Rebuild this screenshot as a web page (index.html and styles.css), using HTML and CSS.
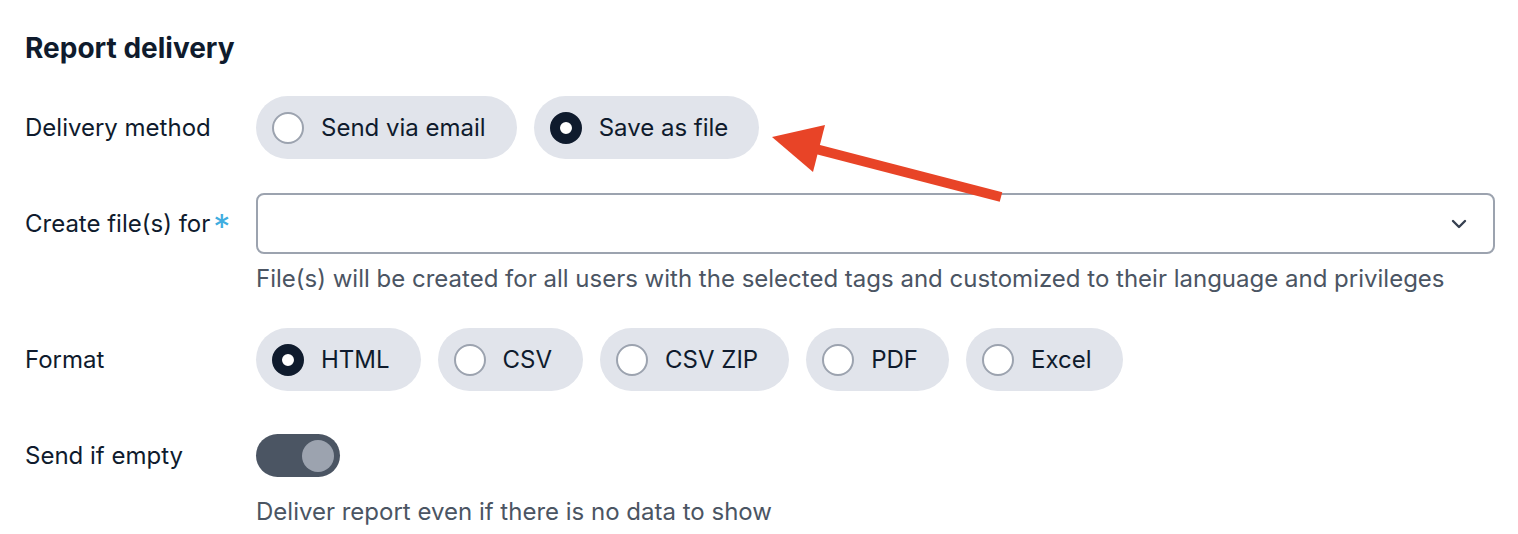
FILE: index.html
```html
<!DOCTYPE html>
<html>
<head>
<meta charset="utf-8">
<link rel="stylesheet" href="styles.css">
</head>
<body>
<div class="page">
  <h2 class="title">Report delivery</h2>

  <div class="row row-method">
    <div class="label">Delivery method</div>
    <div class="pills">
      <div class="pill"><span class="radio"></span><span>Send via email</span></div>
      <div class="pill"><span class="radio checked"></span><span>Save as file</span></div>
    </div>
  </div>

  <div class="row row-files">
    <div class="label select-label">Create file(s) for<span class="req">*</span></div>
    <div class="control">
      <div class="select">
        <svg class="chevron" width="18" height="12" viewBox="0 0 18 12"><path d="M3 3 L9 9 L15 3" fill="none" stroke="#374151" stroke-width="2.4" stroke-linecap="round" stroke-linejoin="round"/></svg>
      </div>
      <div class="help help-files">File(s) will be created for all users with the selected tags and customized to their language and privileges</div>
    </div>
  </div>

  <div class="row row-format">
    <div class="label">Format</div>
    <div class="pills">
      <div class="pill"><span class="radio checked"></span><span>HTML</span></div>
      <div class="pill"><span class="radio"></span><span>CSV</span></div>
      <div class="pill"><span class="radio"></span><span>CSV ZIP</span></div>
      <div class="pill"><span class="radio"></span><span>PDF</span></div>
      <div class="pill"><span class="radio"></span><span>Excel</span></div>
    </div>
  </div>

  <div class="row row-empty">
    <div class="label toggle-label">Send if empty</div>
    <div class="control">
      <div class="toggle"><span class="knob"></span></div>
      <div class="help help-empty">Deliver report even if there is no data to show</div>
    </div>
  </div>

  <svg class="arrow" width="1518" height="534" viewBox="0 0 1518 534">
    <line x1="1001" y1="197" x2="812" y2="148" stroke="#e84427" stroke-width="10"/>
    <polygon points="772,137 825,125 813,172" fill="#e84427"/>
  </svg>
</div>
</body>
</html>
```

FILE: styles.css
```css
html, body {
  margin: 0;
  padding: 0;
  background: #ffffff;
}
body {
  font-family: Inter, "Noto Sans", "Liberation Sans", sans-serif;
  color: #0f1b2d;
}
.page {
  position: relative;
  width: 1518px;
  height: 534px;
  box-sizing: border-box;
  padding: 31px 23px 0 25px;
  overflow: hidden;
}
.title {
  margin: 0;
  font-size: 28px;
  line-height: 34px;
  font-weight: 700;
}
.row {
  display: flex;
  align-items: flex-start;
}
.label {
  width: 231px;
  flex: none;
  font-size: 24px;
  height: 63px;
  display: flex;
  align-items: center;
}
.row-method { margin-top: 31px; }
.row-files { margin-top: 34px; }
.row-format { margin-top: 35px; }
.row-empty { margin-top: 43px; }
.select-label { height: 61px; }
.toggle-label { height: 43px; }
.req {
  color: #40ade0;
  font-size: 34px;
  font-weight: 400;
  margin-left: 3px;
  position: relative;
  top: 3px;
}
.pills {
  display: flex;
  gap: 17px;
}
.pill {
  display: flex;
  align-items: center;
  gap: 17px;
  height: 63px;
  padding: 0 31px 0 16px;
  border-radius: 32px;
  background: #e1e4eb;
  font-size: 24px;
  box-sizing: border-box;
}
.radio {
  width: 32px;
  height: 32px;
  box-sizing: border-box;
  border-radius: 50%;
  border: 2px solid #9ca3af;
  background: #ffffff;
  flex: none;
}
.radio.checked {
  border: 10px solid #0f1b2d;
  background: #ffffff;
}
.control {
  flex: 1;
  display: flex;
  flex-direction: column;
}
.select {
  height: 61px;
  box-sizing: border-box;
  border: 2px solid #9ca3af;
  border-radius: 8px;
  display: flex;
  align-items: center;
  justify-content: flex-end;
  padding-right: 25px;
}
.chevron { display: block; }
.help {
  font-size: 24px;
  line-height: 28px;
  color: #4b5563;
}
.help-files { margin-top: 11px; }
.help-empty { margin-top: 21px; }
.toggle {
  width: 84px;
  height: 43px;
  border-radius: 22px;
  background: #4b5563;
  display: flex;
  align-items: center;
  justify-content: flex-end;
  padding-right: 6px;
  box-sizing: border-box;
}
.knob {
  width: 32px;
  height: 32px;
  border-radius: 50%;
  background: #9ca3af;
}
.arrow {
  position: absolute;
  left: 0;
  top: 0;
  pointer-events: none;
}
```
